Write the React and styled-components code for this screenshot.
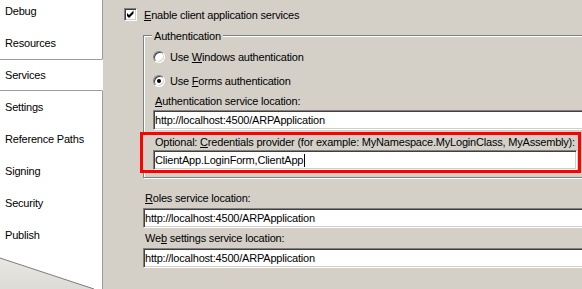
import React from "react";
import styled, { createGlobalStyle } from "styled-components";

const GlobalStyle = createGlobalStyle`
  html, body {
    margin: 0;
    padding: 0;
    overflow: hidden;
  }
  body {
    font-family: "Liberation Sans", Arial, sans-serif;
    font-size: 11px;
    color: #000;
    background: #d4d0c8;
  }
`;

const Window = styled.div`
  display: flex;
  width: 582px;
  height: 289px;
  overflow: hidden;
  background: #d4d0c8;
  letter-spacing: -0.2px;
`;

const Sidebar = styled.nav`
  flex: 0 0 103px;
  display: flex;
  flex-direction: column;
  background: #fff;
  overflow: hidden;
`;

const Tab = styled.div`
  flex: 0 0 32px;
  box-sizing: border-box;
  display: flex;
  align-items: center;
  padding-left: 5px;
  border-right: 1px solid #9c9c9c;
  white-space: nowrap;
  &:first-child {
    margin-top: -5px;
  }
  ${({ $active }) =>
    $active &&
    `
    border-top: 1px solid #9c9c9c;
    border-bottom: 1px solid #9c9c9c;
    border-right-color: #fff;
  `}
`;

const Filler = styled.div`
  flex: 1;
  display: flex;
  align-items: flex-end;
  border-right: 1px solid #9c9c9c;
`;

const Content = styled.main`
  flex: 1;
  min-width: 0;
  padding: 8px 0 0 21px;
  overflow: hidden;
`;

const CheckRow = styled.label`
  display: flex;
  align-items: center;
  gap: 7px;
  height: 13px;
  white-space: nowrap;
`;

const sunken = `
  box-sizing: border-box;
  background: #fff;
  border: 1px solid;
  border-color: #808080 #fff #fff #808080;
  box-shadow: inset 1px 1px 0 #404040, inset -1px -1px 0 #d4d0c8;
`;

const CheckBox = styled.span`
  ${sunken}
  flex: 0 0 13px;
  width: 13px;
  height: 13px;
  display: block;
  position: relative;
  svg {
    position: absolute;
    left: -1px;
    top: -1px;
  }
`;

const Indent = styled.div`
  margin-left: 19px;
  width: 470px;
  display: flex;
  flex-direction: column;
`;

const GroupBox = styled.div`
  margin-top: 14px;
  display: flex;
  flex-direction: column;
  border: 1px solid #808080;
  box-shadow: inset 1px 1px 0 #fff, 1px 1px 0 #fff;
  padding: 0 0 4px 9px;
`;

const Legend = styled.span`
  align-self: flex-start;
  margin: -7px 0 2px -1px;
  padding: 0 2px;
  line-height: 14px;
  background: #d4d0c8;
`;

const RadioRow = styled.label`
  display: flex;
  align-items: center;
  gap: 5px;
  height: 24px;
  white-space: nowrap;
`;

const Radio = styled.span`
  ${sunken}
  flex: 0 0 12px;
  width: 12px;
  height: 12px;
  border-radius: 50%;
  display: flex;
  align-items: center;
  justify-content: center;
  &::after {
    content: "";
    width: 4px;
    height: 4px;
    border-radius: 50%;
    background: ${({ $checked }) => ($checked ? "#000" : "transparent")};
  }
`;

const FieldLabel = styled.div`
  padding-left: 2px;
  line-height: 14px;
  margin-top: ${({ $gap }) => $gap ?? 0}px;
  white-space: nowrap;
`;

const Field = styled.div`
  ${sunken}
  height: 20px;
  margin-top: ${({ $gap }) => $gap ?? 0}px;
  padding-left: 1px;
  display: flex;
  align-items: center;
  white-space: nowrap;
  overflow: hidden;
`;

const Caret = styled.span`
  display: inline-block;
  width: 1px;
  height: 13px;
  margin-left: 1px;
  background: #000;
`;

const Highlight = styled.div`
  box-sizing: border-box;
  width: 441px;
  margin: 2px 0 0 -13px;
  padding: 0 1px 0 10px;
  border: 3px solid #f00;
  background: #d4d0c8;
  display: flex;
  flex-direction: column;
`;

const Key = styled.u`
  text-decoration: underline;
  text-underline-offset: 1px;
`;

const tabs = [
  "Debug",
  "Resources",
  "Services",
  "Settings",
  "Reference Paths",
  "Signing",
  "Security",
  "Publish",
];

const url = "http://localhost:4500/ARPApplication";

export default function App() {
  return (
    <>
      <GlobalStyle />
      <Window>
        <Sidebar>
          {tabs.map((t) => (
            <Tab key={t} $active={t === "Services"}>
              {t}
            </Tab>
          ))}
          <Filler>
            <svg width="102" height="38" viewBox="0 0 102 38">
              <defs>
                <linearGradient id="fold" x1="0" y1="0" x2="0" y2="1">
                  <stop offset="0" stopColor="#e8e7e3" />
                  <stop offset="1" stopColor="#dddbd6" />
                </linearGradient>
              </defs>
              <polygon points="0,7 94,38 0,38" fill="url(#fold)" />
              <line x1="0" y1="7" x2="94" y2="38" stroke="#7c7c7c" strokeWidth="1" />
            </svg>
          </Filler>
        </Sidebar>

        <Content>
          <CheckRow>
            <CheckBox>
              <svg width="13" height="13" viewBox="0 0 13 13">
                <polygon points="3,5 5,7 9.5,2.5 9.5,5.5 5,10 3,8" fill="#000" />
              </svg>
            </CheckBox>
            <span>
              <Key>E</Key>nable client application services
            </span>
          </CheckRow>

          <Indent>
            <GroupBox>
              <Legend>Authentication</Legend>
              <RadioRow>
                <Radio />
                <span>
                  Use <Key>W</Key>indows authentication
                </span>
              </RadioRow>
              <RadioRow>
                <Radio $checked />
                <span>
                  Use <Key>F</Key>orms authentication
                </span>
              </RadioRow>
              <FieldLabel $gap={1}>
                <Key>A</Key>uthentication service location:
              </FieldLabel>
              <Field $gap={2}>{url}</Field>
              <Highlight>
                <FieldLabel>
                  Optional: <Key>C</Key>redentials provider (for example:
                  MyNamespace.MyLoginClass, MyAssembly):
                </FieldLabel>
                <Field $gap={1}>
                  ClientApp.LoginForm,ClientApp
                  <Caret />
                </Field>
              </Highlight>
            </GroupBox>

            <FieldLabel $gap={13}>
              <Key>R</Key>oles service location:
            </FieldLabel>
            <Field $gap={3}>{url}</Field>
            <FieldLabel $gap={3}>
              We<Key>b</Key> settings service location:
            </FieldLabel>
            <Field $gap={3}>{url}</Field>
          </Indent>
        </Content>
      </Window>
    </>
  );
}
